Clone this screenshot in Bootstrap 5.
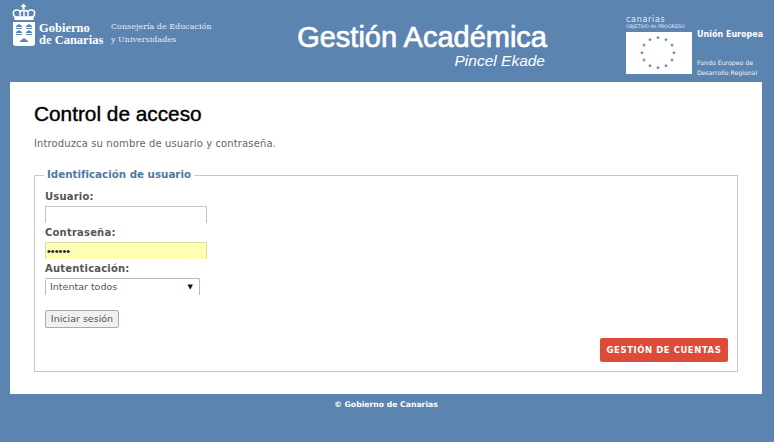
<!DOCTYPE html>
<html lang="es">
<head>
    <meta charset="UTF-8">
    <meta name="viewport" content="width=device-width, initial-scale=1.0">
    <title>Gestión Académica</title>
    <link href="https://cdn.jsdelivr.net/npm/bootstrap@5.3.0/dist/css/bootstrap.min.css" rel="stylesheet">
    <script src="https://cdn.jsdelivr.net/npm/bootstrap@5.3.0/dist/js/bootstrap.bundle.min.js"></script>
    <style>
        html, body { height: 100%; }
        body { background: #5b84b1; font-family: "DejaVu Sans", sans-serif; font-size: 10px; color: #333; overflow: hidden; }
        .top-bar { height: 82px; padding-left: 12px; color: #fff; }
        .top-bar > * { flex-shrink: 0; }
        .gob-logo { width: 24px; height: 44px; margin-top: 4px; }
        .gob-name { font-family: "Liberation Serif", serif; font-weight: 700; font-size: 12.5px; line-height: 12px; margin: 22px 0 0 3px; width: 65px; white-space: nowrap; }
        .gob-dept { font-family: "DejaVu Serif", serif; font-size: 8px; line-height: 13px; margin: 20px 0 0 7px; width: 170px; opacity: .85; white-space: nowrap; }
        .app-title { width: 266px; margin-top: 21px; font-family: "Liberation Sans", sans-serif; text-align: right; }
        .app-title h1 { font-size: 29px; font-weight: 400; line-height: 33px; margin: 0; -webkit-text-stroke: .7px #fff; }
        .app-title p { font-size: 15.5px; font-style: italic; line-height: 13px; margin: 0 2px 0 0; }
        .eu-block { margin: 16px 0 0 79px; width: 137px; }
        .eu-left { width: 66px; }
        .eu-tag { font-size: 8px; line-height: 8px; letter-spacing: .7px; white-space: nowrap; opacity: .85; }
        .eu-sub { font-size: 4.8px; line-height: 6px; white-space: nowrap; opacity: .85; }
        .eu-flag { width: 66px; height: 42px; display: block; background: #fff; margin-top: 2px; }
        .eu-right { margin-left: 5px; white-space: nowrap; }
        .eu-right b { display: block; font-size: 8px; line-height: 9px; margin-top: 14px; }
        .eu-right span { display: block; font-size: 6.2px; line-height: 10px; margin-top: 19px; opacity: .9; }
        .main-panel { background: #fff; margin: 0 12px 0 10px; height: 312px; padding: 21px 24px 0; }
        .main-panel h2 { font-family: "Liberation Sans", sans-serif; font-size: 20.800px; line-height: 22px; margin: 0 0 13px; color: #000; font-weight: 400; -webkit-text-stroke: .4px #000; }
        .intro-text { font-size: 10px; line-height: 12px; margin: 0 0 25px; color: #666; letter-spacing: .12px; }
        .login-box { border: 1px solid #c8c8c8; height: 197px; padding: 15px 10px 0; position: relative; }
        .login-box legend { float: none; width: auto; font-size: 10.3px; line-height: 12px; font-weight: 700; color: #54789c; background: #fff; padding: 0 3px; margin: -23px 0 0 -1px; position: absolute; }
        .field-label { display: block; font-size: 10px; line-height: 11px; font-weight: 700; color: #555; margin: 0 0 4px; letter-spacing: .2px; }
        .field-input { display: block; width: 162px; height: 17px; border: 1px solid #c4c4c4; border-bottom: 0; background: #fff; padding: 0 1px; font-family: "Liberation Sans", sans-serif; font-size: 11px; margin-bottom: 4px; outline: 0; }
        .field-pass { background: #ffffb4; border-color: #dcdca8; color: #222; }
        .field-select { display: flex; width: 155px; height: 17px; border: 1px solid #bbb; border-bottom: 0; border-radius: 2px 2px 0 0; padding: 1px 6px 0 4px; font-size: 9.5px; line-height: 14px; color: #555; justify-content: space-between; margin-bottom: 15px; }
        .arrow-down { font-size: 7px; color: #111; }
        .login-btn { background: #f0f0f0; border: 1px solid #aaa; border-radius: 2px; width: 74px; height: 18px; padding: 0; font-size: 9.5px; line-height: 14px; color: #555; display: block; font-family: inherit; }
        .accounts-btn { background: #dd4b39; color: #fff; font-size: 8.5px; font-weight: 700; letter-spacing: .55px; border: 0; border-radius: 2px; width: 128px; height: 24px; padding: 0; position: absolute; right: 9px; bottom: 9px; }
        .page-foot { text-align: center; color: #fff; font-size: 7.7px; font-weight: 700; line-height: 10px; margin-top: 6px; padding-right: 2px; }
    </style>
</head>
<body>
<div class="top-bar d-flex align-items-start">
    <svg class="gob-logo" viewBox="0 0 24 44" fill="#fff">
        <path d="M10.5 0h2v1.5H14v1.5h-1.5V5h-2V3H9V1.5h1.5z"/>
        <path d="M3.5 13C.5 11 .5 6.5 4 6c2-.3 3.500.5 4.500 1.500C9.500 6 14 6 15.500 7.500 16.500 6.500 18 5.700 20 6c3.500.5 3.500 5 .5 7z" fill="none" stroke="#fff" stroke-width="1.600"/>
        <path d="M8 7v6M16 7v6M12 6v7" stroke="#fff" stroke-width="1.500"/>
        <rect x="2.500" y="13" width="19" height="3"/>
        <path d="M1 18h22v21c0 2-1 3-3 3H4c-2 0-3-1-3-3z"/>
        <g fill="#5b84b1">
            <path d="M4 22l3-2 3 2v1H4zM14 22l3-2 3 2v1h-6zM4 28l3-2 3 2v1H4zM14 28l3-2 3 2v1h-6zM8 37l4-3 4 3v1H8z"/>
            <rect x="4" y="24" width="6" height="1"/><rect x="14" y="24" width="6" height="1"/>
            <rect x="4" y="30" width="6" height="1"/><rect x="14" y="30" width="6" height="1"/>
        </g>
    </svg>
    <div class="gob-name">Gobierno<br>de Canarias</div>
    <div class="gob-dept">Consejería de Educación<br>y Universidades</div>
    <div class="app-title">
        <h1>Gestión Académica</h1>
        <p>Pincel Ekade</p>
    </div>
    <div class="eu-block d-flex">
        <div class="eu-left">
            <div class="eu-tag">canarias</div>
            <div class="eu-sub">OBJETIVO de PROGRESO</div>
            <svg class="eu-flag" viewBox="0 0 66 42" fill="#6285ad">
                <defs><path id="eu-star" d="M0-2 .6-.6 2-.6 .9.3 1.300 1.800 0 .9-1.300 1.800-.9.3-2-.6-.6-.6z"/></defs>
                <use href="#eu-star" x="32" y="5.500"/><use href="#eu-star" x="40" y="7.500"/><use href="#eu-star" x="46" y="13"/><use href="#eu-star" x="48" y="20.500"/><use href="#eu-star" x="46" y="28"/><use href="#eu-star" x="40" y="33.500"/><use href="#eu-star" x="32" y="35.500"/><use href="#eu-star" x="24" y="33.500"/><use href="#eu-star" x="18" y="28"/><use href="#eu-star" x="16" y="20.500"/><use href="#eu-star" x="18" y="13"/><use href="#eu-star" x="24" y="7.500"/>
            </svg>
        </div>
        <div class="eu-right">
            <b>Unión Europea</b>
            <span>Fondo Europeo de<br>Desarrollo Regional</span>
        </div>
    </div>
</div>

<div class="main-panel">
    <h2>Control de acceso</h2>
    <p class="intro-text">Introduzca su nombre de usuario y contraseña.</p>
    <form class="login-box">
        <legend>Identificación de usuario</legend>
        <label class="field-label" for="usuario">Usuario:</label>
        <input class="field-input" id="usuario" type="text">
        <label class="field-label" for="clave">Contraseña:</label>
        <input class="field-input field-pass" id="clave" type="password" value="123456">
        <label class="field-label">Autenticación:</label>
        <div class="field-select"><span>Intentar todos</span><span class="arrow-down">▼</span></div>
        <button class="login-btn" type="button">Iniciar sesión</button>
        <button class="accounts-btn" type="button">GESTIÓN DE CUENTAS</button>
    </form>
</div>
<div class="page-foot">© Gobierno de Canarias</div>
</body>
</html>
